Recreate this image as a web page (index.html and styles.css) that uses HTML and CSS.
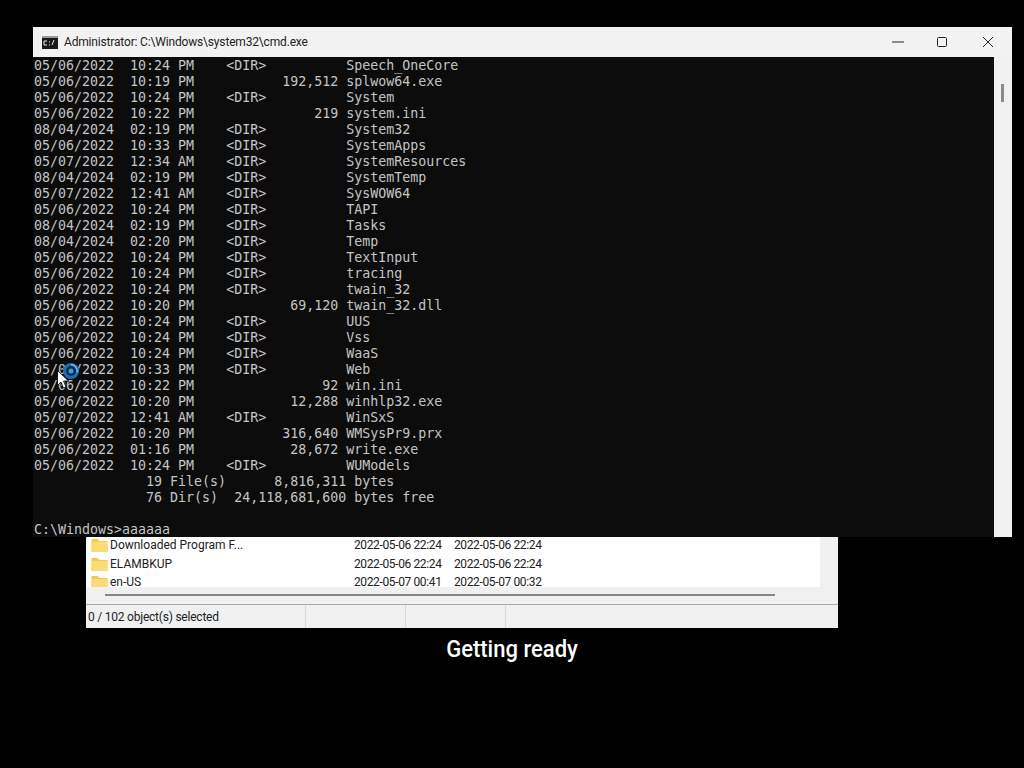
FILE: index.html
```html
<!DOCTYPE html>
<html lang="en">
<head>
<meta charset="utf-8">
<title>cmd.exe</title>
<link rel="stylesheet" href="styles.css">
</head>
<body>
<div class="desktop">
  <section class="explorer">
    <div class="list">
      <div class="row"><svg class="folder" viewBox="0 0 16 14"><path d="M0 1h6l2 2h8v11H0z" fill="#f5c94e"/><path d="M0 4h16v10H0z" fill="#fbdc74"/></svg><span class="name">Downloaded Program F...</span><span class="date">2022-05-06 22:24</span><span class="date">2022-05-06 22:24</span></div>
      <div class="row"><svg class="folder" viewBox="0 0 16 14"><path d="M0 1h6l2 2h8v11H0z" fill="#f5c94e"/><path d="M0 4h16v10H0z" fill="#fbdc74"/></svg><span class="name">ELAMBKUP</span><span class="date">2022-05-06 22:24</span><span class="date">2022-05-06 22:24</span></div>
      <div class="row"><svg class="folder" viewBox="0 0 16 14"><path d="M0 1h6l2 2h8v11H0z" fill="#f5c94e"/><path d="M0 4h16v10H0z" fill="#fbdc74"/></svg><span class="name">en-US</span><span class="date">2022-05-07 00:41</span><span class="date">2022-05-07 00:32</span></div>
    </div>
    <div class="hscroll"><div class="hthumb"></div></div>
    <div class="status">
      <span class="cell first">0 / 102 object(s) selected</span>
      <span class="cell">&nbsp;</span>
      <span class="cell">&nbsp;</span>
    </div>
  </section>

  <p class="ready">Getting ready</p>

  <section class="cmd">
    <header class="titlebar">
      <svg class="appicon" viewBox="0 0 16 13"><rect width="16" height="13" fill="#1a1a1a"/><rect y="0" width="16" height="2" fill="#9a9a9a"/><path d="M2 5h3M2 5v4M2 9h3M7 6h1M7 9h1M10 9l2-5" stroke="#eee" fill="none"/></svg>
      <span class="title">Administrator: C:\Windows\system32\cmd.exe</span>
      <span class="controls">
        <svg class="ctl" viewBox="0 0 12 12"><path d="M0 6h12" stroke="#222" fill="none"/></svg>
        <svg class="ctl" viewBox="0 0 12 12"><rect x="1.5" y="1.5" width="9" height="9" rx="1" stroke="#222" fill="none"/></svg>
        <svg class="ctl" viewBox="0 0 12 12"><path d="M1 1l10 10M11 1L1 11" stroke="#222" fill="none"/></svg>
      </span>
    </header>
    <div class="content">
<pre class="console">05/06/2022  10:24 PM    &lt;DIR&gt;          Speech_OneCore
05/06/2022  10:19 PM           192,512 splwow64.exe
05/06/2022  10:24 PM    &lt;DIR&gt;          System
05/06/2022  10:22 PM               219 system.ini
08/04/2024  02:19 PM    &lt;DIR&gt;          System32
05/06/2022  10:33 PM    &lt;DIR&gt;          SystemApps
05/07/2022  12:34 AM    &lt;DIR&gt;          SystemResources
08/04/2024  02:19 PM    &lt;DIR&gt;          SystemTemp
05/07/2022  12:41 AM    &lt;DIR&gt;          SysWOW64
05/06/2022  10:24 PM    &lt;DIR&gt;          TAPI
08/04/2024  02:19 PM    &lt;DIR&gt;          Tasks
08/04/2024  02:20 PM    &lt;DIR&gt;          Temp
05/06/2022  10:24 PM    &lt;DIR&gt;          TextInput
05/06/2022  10:24 PM    &lt;DIR&gt;          tracing
05/06/2022  10:24 PM    &lt;DIR&gt;          twain_32
05/06/2022  10:20 PM            69,120 twain_32.dll
05/06/2022  10:24 PM    &lt;DIR&gt;          UUS
05/06/2022  10:24 PM    &lt;DIR&gt;          Vss
05/06/2022  10:24 PM    &lt;DIR&gt;          WaaS
05/06/2022  10:33 PM    &lt;DIR&gt;          Web
05/06/2022  10:22 PM                92 win.ini
05/06/2022  10:20 PM            12,288 winhlp32.exe
05/07/2022  12:41 AM    &lt;DIR&gt;          WinSxS
05/06/2022  10:20 PM           316,640 WMSysPr9.prx
05/06/2022  01:16 PM            28,672 write.exe
05/06/2022  10:24 PM    &lt;DIR&gt;          WUModels
              19 File(s)      8,816,311 bytes
              76 Dir(s)  24,118,681,600 bytes free

C:\Windows&gt;aaaaaa</pre>
      <div class="vscroll"><div class="vthumb"></div></div>
    </div>
  </section>

  <svg class="spinner" viewBox="0 0 18 18"><circle cx="9" cy="9" r="8" fill="#1c6fb8"/><circle cx="9" cy="9" r="5" fill="#0c2a44"/><circle cx="9" cy="9" r="2.5" fill="#3f9be0"/><path d="M9 2.5a6.5 6.5 0 0 1 6 8" stroke="#6db7ee" stroke-width="1.5" fill="none"/></svg>
  <svg class="pointer" viewBox="0 0 12 19"><path d="M.5.5v15l3.5-3.5 2.5 6 2.5-1-2.5-6h5z" fill="#fff" stroke="#000" stroke-width=".8"/></svg>
</div>
</body>
</html>
```
FILE: styles.css
```css
html, body { margin: 0; padding: 0; background: #000; }
.desktop { position: relative; width: 1024px; height: 768px; overflow: hidden; background: #000; }

.cmd {
  position: absolute; left: 33px; top: 27px; width: 979px; height: 510px;
  display: flex; flex-direction: column; background: #f2f2f2; overflow: hidden;
}
.titlebar { height: 30px; flex: none; display: flex; align-items: center; padding-left: 9px; background: #f2f2f2; }
.appicon { width: 16px; height: 13px; margin-right: 6px; }
.title { font: 12px/30px Roboto, "Noto Sans", sans-serif; color: #222; letter-spacing: -0.17px; }
.controls { margin-left: auto; display: flex; gap: 33px; padding-right: 18px; }
.ctl { width: 12px; height: 12px; display: block; }
.ctl:nth-child(2) { margin-left: -1px; margin-right: 1px; }
.content { flex: 1; display: flex; min-height: 0; }
.console {
  flex: 1; margin: 0; padding: 1px 0 0 1px; background: #0c0c0c; color: #c4c4c4; overflow: hidden;
  font: 13.3px/16px "DejaVu Sans Mono", "Liberation Mono", monospace;
}
.vscroll { width: 18px; flex: none; background: #f0f0f0; padding: 27px 0 0 7px; box-sizing: border-box; }
.vthumb { width: 3px; height: 18px; background: #8a8a8a; }

.explorer {
  position: absolute; left: 86px; top: 520px; width: 752px; height: 108px;
  display: flex; flex-direction: column; background: #f0f0f0; box-sizing: border-box;
}
.list { height: 67px; flex: none; margin-left: 1px; width: 733px; background: #fff; padding-top: 16px; box-sizing: border-box; overflow: hidden; }
.row { height: 18.5px; display: flex; align-items: center; font: 12px/18px Roboto, "Noto Sans", sans-serif; color: #222; white-space: nowrap; }
.folder { width: 17px; height: 14px; margin-left: 4px; margin-right: 2px; flex: none; }
.name { width: 244px; flex: none; }
.date { width: 100px; flex: none; letter-spacing: -0.37px; }
.hscroll { height: 17px; flex: none; padding-top: 7px; box-sizing: border-box; padding-left: 19px; }
.hthumb { width: 670px; height: 2px; background: #858585; }
.status {
  flex: 1; min-height: 0; display: flex; border-top: 1px solid #a8a8a8; background: #f0f0f0;
  font: 12px/23px Roboto, "Noto Sans", sans-serif; color: #222;
}
.cell { width: 99px; border-right: 1px solid #d8d8d8; flex: none; padding-top: 1px; }
.cell.first { width: 217px; padding-left: 2px; letter-spacing: -0.22px; }

.ready {
  position: absolute; left: 0; top: 632px; width: 1024px; margin: 0; text-align: center;
  font: 500 24px/34px Roboto, "Noto Sans", sans-serif; color: #fff; transform: scaleX(.917);
}
.spinner { position: absolute; left: 62px; top: 362px; width: 18px; height: 18px; }
.pointer { position: absolute; left: 57px; top: 370px; width: 12px; height: 19px; }
```
